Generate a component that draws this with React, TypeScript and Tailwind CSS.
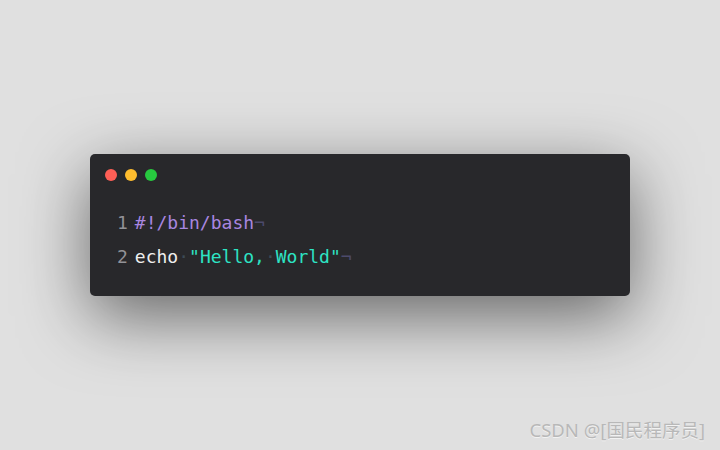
export default function App() {
  const dot = <span className="text-[#3c4a55]">·</span>
  return (
    <div className="relative flex h-[450px] w-[720px] items-center justify-center bg-[#e0e0e0]">
      <div className="h-[142px] w-[540px] rounded-[5px] bg-[#28282b] shadow-[0_20px_68px_rgba(0,0,0,0.55)]">
        <div className="flex gap-2 px-[15px] pt-[15px]">
          <span className="h-3 w-3 rounded-full bg-[#ff5f56]" />
          <span className="h-3 w-3 rounded-full bg-[#ffbd2e]" />
          <span className="h-3 w-3 rounded-full bg-[#27c93f]" />
        </div>
        <div className="mt-[25px] pl-[27px] font-['DejaVu_Sans_Mono',monospace] text-[18px] leading-[34px] whitespace-pre">
          <div className="flex">
            <span className="mr-[7px] text-[#929297]">1</span>
            <span className="text-[#a886e0]">#!/bin/bash</span>
            <span className="text-[#4c4a6c]">¬</span>
          </div>
          <div className="flex">
            <span className="mr-[7px] text-[#929297]">2</span>
            <span className="text-[#eeeeee]">echo</span>
            {dot}
            <span className="text-[#2de3c4]">"Hello,</span>
            {dot}
            <span className="text-[#2de3c4]">World"</span>
            <span className="text-[#4c4a6c]">¬</span>
          </div>
        </div>
      </div>
      <div className="absolute right-[15px] bottom-[6px] font-['Noto_Sans','Noto_Sans_CJK_SC',sans-serif] text-[18.5px] text-[#b8b8b8] [text-shadow:0_1px_0_rgba(255,255,255,0.6)]">
        CSDN @[国民程序员]
      </div>
    </div>
  )
}
